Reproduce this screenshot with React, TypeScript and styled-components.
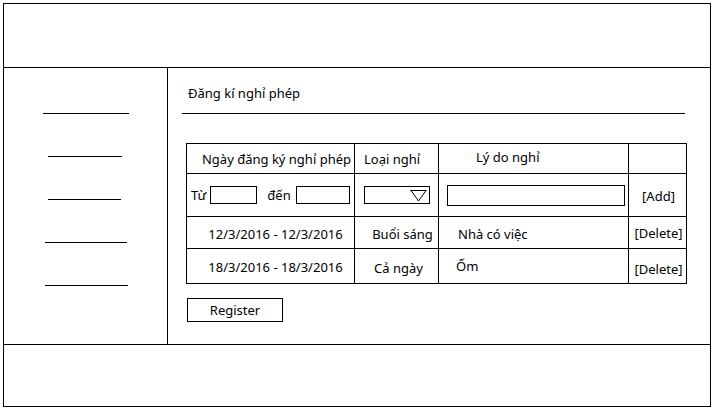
import React from "react";
import styled, { createGlobalStyle } from "styled-components";

const GlobalStyle = createGlobalStyle`
  html, body { margin: 0; padding: 0; background: #fff; }
  body { font-family: "Noto Sans", "Open Sans", "Liberation Sans", sans-serif; color: #000; }
  * { box-sizing: border-box; }
`;

const Frame = styled.div`
  margin: 3px 0 0 3px;
  width: 708px;
  height: 404px;
  border: 1px solid #000;
  display: flex;
  flex-direction: column;
`;

const Header = styled.header`
  height: 64px;
  border-bottom: 1px solid #000;
  flex: none;
`;

const Middle = styled.div`
  display: flex;
  height: 277px;
  flex: none;
  border-bottom: 1px solid #000;
`;

const Footer = styled.footer`
  flex: 1;
`;

const Sidebar = styled.nav`
  width: 164px;
  flex: none;
  border-right: 1px solid #000;
  display: flex;
  flex-direction: column;
  align-items: center;
  padding-top: 45px;
  gap: 42px;
`;

const NavLine = styled.div<{ $w: number; $shift?: number }>`
  width: ${(p) => p.$w}px;
  height: 1px;
  background: #000;
  margin-left: ${(p) => p.$shift ?? 0}px;
`;

const Main = styled.main`
  flex: 1;
  padding: 16px 0 0 14px;
  display: flex;
  flex-direction: column;
  align-items: flex-start;
`;

const Title = styled.h1`
  margin: 0;
  padding-left: 6px;
  font-size: 13px;
  font-weight: 400;
  line-height: 18px;
`;

const TitleRule = styled.div`
  margin-top: 11px;
  width: 503px;
  height: 1px;
  background: #000;
`;

const Table = styled.div`
  margin: 29px 0 0 4px;
  display: grid;
  grid-template-columns: 168px 84px 190px 58px;
  grid-template-rows: 30px 43px 32px 35px;
  border-left: 1px solid #000;
  border-top: 1px solid #000;
  font-size: 13px;
`;

const Cell = styled.div<{ $align?: "center" | "start"; $pad?: number }>`
  border-right: 1px solid #000;
  border-bottom: 1px solid #000;
  display: flex;
  align-items: center;
  justify-content: ${(p) => (p.$align === "start" ? "flex-start" : "center")};
  padding-left: ${(p) => p.$pad ?? 0}px;
  white-space: nowrap;
`;

const Label = styled.span<{ $before?: number; $after?: number }>`
  margin-left: ${(p) => p.$before ?? 0}px;
  margin-right: ${(p) => p.$after ?? 0}px;
`;

const Box = styled.div<{ $w: number; $h: number }>`
  width: ${(p) => p.$w}px;
  height: ${(p) => p.$h}px;
  border: 1px solid #000;
  background: #fff;
`;

const Select = styled.div`
  width: 66px;
  height: 18px;
  border: 1px solid #000;
  display: flex;
  justify-content: flex-end;
  align-items: flex-start;
  padding: 2px 2px 0 0;
`;

const Nudge = styled.span<{ $dx?: number; $dy?: number }>`
  position: relative;
  left: ${(p) => p.$dx ?? 0}px;
  top: ${(p) => p.$dy ?? 0}px;
`;

const RegisterButton = styled.button`
  margin: 14px 0 0 5px;
  width: 96px;
  height: 24px;
  border: 1px solid #000;
  background: #fff;
  font: inherit;
  font-size: 13px;
  color: #000;
  padding: 0;
`;

export default function App() {
  return (
    <>
      <GlobalStyle />
      <Frame>
        <Header />
        <Middle>
          <Sidebar>
            <NavLine $w={86} />
            <NavLine $w={74} $shift={-1} />
            <NavLine $w={73} $shift={-2} />
            <NavLine $w={82} />
            <NavLine $w={83} $shift={1} />
          </Sidebar>
          <Main>
            <Title>Đăng kí nghỉ phép</Title>
            <TitleRule />
            <Table>
              <Cell><Nudge $dx={6}>Ngày đăng ký nghỉ phép</Nudge></Cell>
              <Cell $align="start" $pad={9}>Loại nghỉ</Cell>
              <Cell $align="start" $pad={37}><Nudge $dy={-2}>Lý do nghỉ</Nudge></Cell>
              <Cell />

              <Cell $align="start" $pad={4}>
                <Label $after={4}>Từ</Label>
                <Box $w={47} $h={18} />
                <Label $before={10} $after={5}>đến</Label>
                <Box $w={54} $h={18} />
              </Cell>
              <Cell $align="start" $pad={9}>
                <Select>
                  <svg width="17" height="13" viewBox="0 0 17 13">
                    <path d="M0.5 1.5 H16.5 M1 1.5 L8.5 12 L16 1.5" stroke="#000" strokeWidth="1" fill="none" />
                  </svg>
                </Select>
              </Cell>
              <Cell $align="start" $pad={8}>
                <Box $w={178} $h={21} />
              </Cell>
              <Cell><Nudge $dx={1} $dy={1}>[Add]</Nudge></Cell>

              <Cell><Nudge $dx={5} $dy={1}>12/3/2016 - 12/3/2016</Nudge></Cell>
              <Cell><Nudge $dx={6} $dy={1}>Buổi sáng</Nudge></Cell>
              <Cell $align="start" $pad={19}><Nudge $dy={1}>Nhà có việc</Nudge></Cell>
              <Cell><Nudge $dx={1} $dy={0}>[Delete]</Nudge></Cell>

              <Cell><Nudge $dx={5} $dy={1}>18/3/2016 - 18/3/2016</Nudge></Cell>
              <Cell><Nudge $dx={2} $dy={2}>Cả ngày</Nudge></Cell>
              <Cell $align="start" $pad={17}>Ốm</Cell>
              <Cell><Nudge $dx={1} $dy={3}>[Delete]</Nudge></Cell>
            </Table>
            <RegisterButton>Register</RegisterButton>
          </Main>
        </Middle>
        <Footer />
      </Frame>
    </>
  );
}
